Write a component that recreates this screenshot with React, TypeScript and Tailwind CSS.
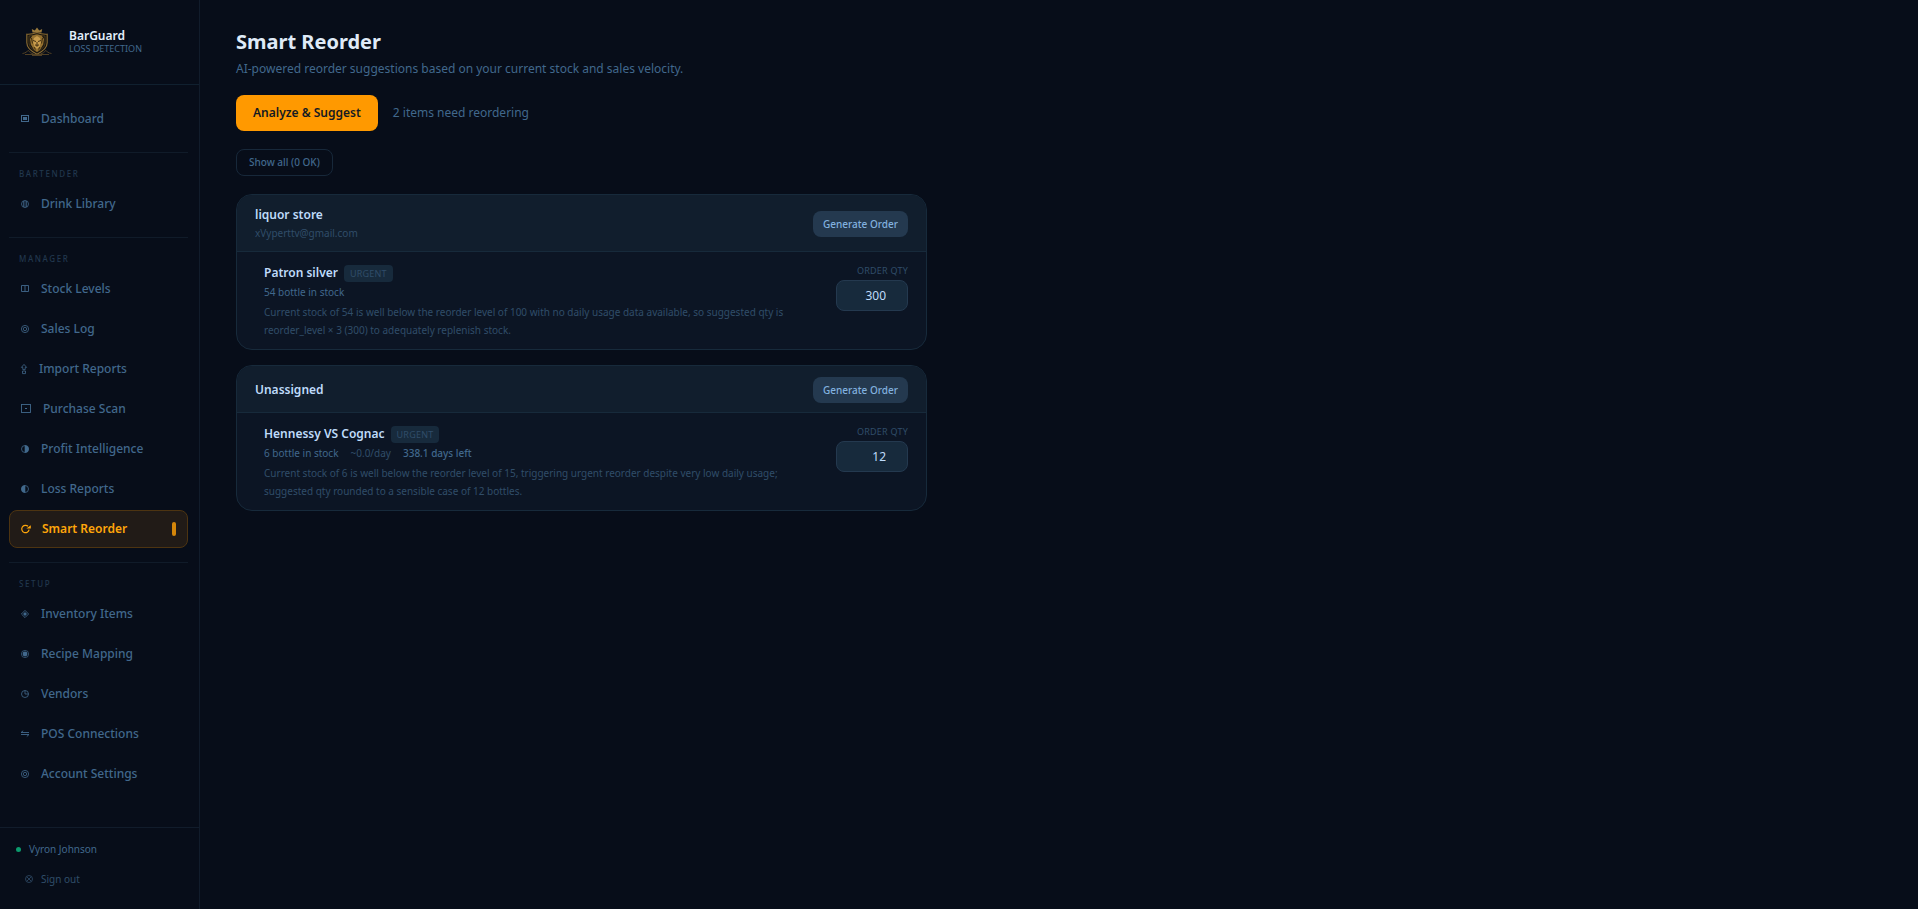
import { useState } from "react";
import type { ReactNode } from "react";

type IconName =
  | "dashboard"
  | "drink"
  | "stock"
  | "target"
  | "upload"
  | "scan"
  | "halfRight"
  | "halfLeft"
  | "reorder"
  | "diamond"
  | "fisheye"
  | "clock"
  | "swap"
  | "signout";

const ICONS: Record<IconName, { width: number; body: ReactNode }> = {
  dashboard: {
    width: 8,
    body: (
      <>
        <rect x="0.5" y="0.5" width="7" height="6" />
        <rect x="2.5" y="2.5" width="3" height="2" fill="currentColor" />
      </>
    ),
  },
  drink: {
    width: 8,
    body: (
      <>
        <circle cx="4" cy="4" r="3.5" strokeWidth="0.8" />
        <path d="M2.5 1v6M4 .5v7M5.5 1v6" strokeWidth="0.7" />
      </>
    ),
  },
  stock: {
    width: 8,
    body: <path d="M.5 .5h7v6h-7zM4 .5v6" strokeWidth="0.9" />,
  },
  target: {
    width: 8,
    body: (
      <>
        <circle cx="4" cy="4" r="3.6" strokeWidth="0.8" />
        <circle cx="4" cy="4" r="1.7" strokeWidth="0.8" />
      </>
    ),
  },
  upload: {
    width: 6,
    body: <path d="M3 -.6L5.6 2.4H4.2v2.2H1.8V2.4H.4zM1.5 6h3v2.6h-3z" strokeWidth="0.8" />,
  },
  scan: {
    width: 10,
    body: (
      <>
        <rect x="0.5" y="-0.5" width="9" height="8" strokeWidth="0.9" />
        <path d="M4 3.5h2" />
      </>
    ),
  },
  halfRight: {
    width: 8,
    body: (
      <>
        <circle cx="4" cy="4" r="3.5" strokeWidth="0.8" />
        <path d="M4 .5a3.5 3.5 0 0 1 0 7z" fill="currentColor" strokeWidth="0.6" />
      </>
    ),
  },
  halfLeft: {
    width: 8,
    body: (
      <>
        <circle cx="4" cy="4" r="3.5" strokeWidth="0.8" />
        <path d="M4 .5a3.5 3.5 0 0 0 0 7z" fill="currentColor" strokeWidth="0.6" />
      </>
    ),
  },
  reorder: {
    width: 9,
    body: (
      <>
        <path d="M7 1.3A3.7 3.7 0 1 0 8.1 4.6" strokeWidth="1.2" />
        <path d="M5.4 3.4h4.4V.3z" fill="currentColor" stroke="none" />
      </>
    ),
  },
  diamond: {
    width: 8,
    body: (
      <>
        <path d="M4 .4L7.6 4 4 7.6.4 4z" strokeWidth="0.8" />
        <path d="M4 2L6 4 4 6 2 4z" fill="currentColor" stroke="none" />
      </>
    ),
  },
  fisheye: {
    width: 8,
    body: (
      <>
        <circle cx="4" cy="4" r="3.6" strokeWidth="0.7" />
        <circle cx="4" cy="4" r="2.4" fill="currentColor" stroke="none" />
      </>
    ),
  },
  clock: {
    width: 8,
    body: (
      <>
        <circle cx="4" cy="4" r="3.5" strokeWidth="0.8" />
        <path d="M4 .5V4h3.5" strokeWidth="0.8" />
      </>
    ),
  },
  swap: {
    width: 8,
    body: <path d="M0 2.5h8M0 2.5L2.2.8M0 4.5h8M8 4.5L5.8 6.5" strokeWidth="0.9" />,
  },
  signout: {
    width: 8,
    body: (
      <>
        <circle cx="4" cy="4" r="3.5" strokeWidth="0.8" />
        <path d="M2 2l4 4M6 2L2 6" strokeWidth="0.8" />
      </>
    ),
  },
};

function Icon({ name }: { name: IconName }) {
  const { width, body } = ICONS[name];
  return (
    <svg
      width={width}
      height="8"
      viewBox={`0 0 ${width} 8`}
      fill="none"
      stroke="currentColor"
      className="shrink-0 overflow-visible"
      aria-hidden="true"
    >
      {body}
    </svg>
  );
}

const NAV: { title: string | null; items: { label: string; icon: IconName }[] }[] = [
  { title: null, items: [{ label: "Dashboard", icon: "dashboard" }] },
  { title: "Bartender", items: [{ label: "Drink Library", icon: "drink" }] },
  {
    title: "Manager",
    items: [
      { label: "Stock Levels", icon: "stock" },
      { label: "Sales Log", icon: "target" },
      { label: "Import Reports", icon: "upload" },
      { label: "Purchase Scan", icon: "scan" },
      { label: "Profit Intelligence", icon: "halfRight" },
      { label: "Loss Reports", icon: "halfLeft" },
      { label: "Smart Reorder", icon: "reorder" },
    ],
  },
  {
    title: "Setup",
    items: [
      { label: "Inventory Items", icon: "diamond" },
      { label: "Recipe Mapping", icon: "fisheye" },
      { label: "Vendors", icon: "clock" },
      { label: "POS Connections", icon: "swap" },
      { label: "Account Settings", icon: "target" },
    ],
  },
];

const VENDORS = [
  {
    id: "liquor-store",
    name: "liquor store",
    email: "xVyperttv@gmail.com",
    item: "Patron silver",
    stock: "54 bottle in stock",
    usage: null,
    daysLeft: null,
    reason:
      "Current stock of 54 is well below the reorder level of 100 with no daily usage data available, so suggested qty is reorder_level × 3 (300) to adequately replenish stock.",
    qty: 300,
  },
  {
    id: "unassigned",
    name: "Unassigned",
    email: null,
    item: "Hennessy VS Cognac",
    stock: "6 bottle in stock",
    usage: "~0.0/day",
    daysLeft: "338.1 days left",
    reason:
      "Current stock of 6 is well below the reorder level of 15, triggering urgent reorder despite very low daily usage; suggested qty rounded to a sensible case of 12 bottles.",
    qty: 12,
  },
];

function Logo() {
  return (
    <svg width="30" height="30" viewBox="0 0 30 30" fill="none" className="shrink-0" aria-hidden="true">
      <path d="M10.5 5.5L9.8 2l3 1.6L15 .5l2.2 3.1 3-1.6-.7 3.5z" fill="#9a7a3c" />
      <path
        d="M4.8 7.2Q10 7.5 15 5.6q5 1.9 10.2 1.6v8.6c0 5.4-4.4 8.6-10.2 11.4C9.2 24.4 4.8 21.2 4.8 15.8z"
        fill="#17140f"
        stroke="#8b6c33"
        strokeWidth="1.1"
      />
      <path d="M7 9q4.500 0 8-1.800Q18.500 9 23 9v6.500c0 4-3 6.800-8 9.300-5-2.500-8-5.300-8-9.300z" stroke="#5d4822" strokeWidth="0.7" />
      <path d="M15 7.500l4.500 1 2.500 3.500-.8 5.500-2.700 4.500L15 25l-3.500-3-2.700-4.500L8 12l2.500-3.500z" fill="#94702f" />
      <path d="M15 9l3 2 1 4-1.500 4.500L15 22l-2.500-2.500L11 15l1-4z" fill="#c89c4d" />
      <path
        d="M11 13.500l3 1M19 13.500l-3 1M15 15v2.500M13.400 18h3.200L15 19.300zM12 20l1.500 2.500M18 20l-1.500 2.500M9.500 11l1 5.500M20.500 11l-1 5.500"
        stroke="#33240d"
        strokeWidth="0.9"
      />
      <path
        d="M.5 26.500c3-.2 4.500-2.300 6-3 1 2 3 3 5 3.200M29.500 26.500c-3-.2-4.500-2.300-6-3-1 2-3 3-5 3.200M3 27.500h24M10 28.500h10"
        stroke="#634c27"
        strokeWidth="0.8"
      />
    </svg>
  );
}

function Sidebar() {
  return (
    <aside className="w-[200px] shrink-0 flex flex-col border-r border-[#111c2b]">
      <div className="h-[85px] shrink-0 flex items-center gap-4 pl-[22px] border-b border-[#10202f]">
        <Logo />
        <div className="pl-px">
          <p className="text-[12px] leading-[14px] font-semibold text-[#e2effc]">BarGuard</p>
          <p className="text-[9px] leading-3 text-[#41688c]">LOSS DETECTION</p>
        </div>
      </div>

      <nav className="flex-1 pt-[15px] pl-[9px] pr-[11px]">
        {NAV.map((section) => (
          <div key={section.title ?? "main"}>
            {section.title && (
              <>
                <div className="h-px mt-[14px] bg-[#101b29]" />
                <h2 className="pt-[15px] pb-[6px] pl-[10px] text-[8px] leading-[11px] font-medium tracking-[0.2em] uppercase text-[#21374d]">
                  {section.title}
                </h2>
              </>
            )}
            <ul className="flex flex-col gap-[2px]">
              {section.items.map((item) => {
                const active = item.label === "Smart Reorder";
                return (
                  <li key={item.label}>
                    <a
                      href="#"
                      aria-current={active ? "page" : undefined}
                      className={`h-[38px] px-[11px] flex items-center gap-3 rounded-lg border text-[12px] leading-4 ${
                        active
                          ? "border-[#4d3411] bg-[#211b17] font-semibold text-[#ffa60a]"
                          : "border-transparent font-medium text-[#41688c]"
                      }`}
                    >
                      <Icon name={item.icon} />
                      <span className="flex-1">{item.label}</span>
                      {active && <span className="w-1 h-[14px] rounded-xs bg-[#d4860a]" />}
                    </a>
                  </li>
                );
              })}
            </ul>
          </div>
        ))}
      </nav>

      <div className="h-[82px] shrink-0 pt-[11px] pl-4 border-t border-[#111c2b]">
        <div className="flex items-center gap-2 text-[10px] leading-5 text-[#41688c]">
          <span className="w-[5px] h-[5px] rounded-full bg-[#0b9b6d]" />
          Vyron Johnson
        </div>
        <button type="button" className="mt-[10px] ml-[9px] flex items-center gap-2 text-[10px] leading-5 text-[#304d69]">
          <Icon name="signout" />
          Sign out
        </button>
      </div>
    </aside>
  );
}

function VendorCard({ vendor }: { vendor: (typeof VENDORS)[number] }) {
  const [qty, setQty] = useState(vendor.qty);
  const inputId = `qty-${vendor.id}`;

  return (
    <section className="rounded-2xl border border-[#172a3b] bg-[#0c1524] overflow-hidden">
      <header className="px-[18px] pt-[11px] pb-[9px] flex items-center justify-between border-b border-[#172a3b] bg-[#111e2d]">
        <div>
          <h2 className="text-[12px] leading-[18px] font-semibold text-[#bfdbfa]">{vendor.name}</h2>
          {vendor.email && <p className="text-[10px] leading-[18px] text-[#304d69]">{vendor.email}</p>}
        </div>
        <button type="button" className="h-[26px] px-[10px] rounded-lg bg-[#24394f] text-[10px] font-medium text-[#82b1df]">
          Generate Order
        </button>
      </header>

      <div className="flex items-start justify-between gap-4 pt-3 pb-[10px] pl-[27px] pr-[18px]">
        <div className="max-w-[545px]">
          <div className="flex items-center gap-[6px]">
            <h3 className="text-[12px] leading-[18px] font-semibold text-[#bfdbfa]">{vendor.item}</h3>
            <span className="h-[17px] px-[6px] rounded-sm bg-[#172a3c] text-[9px] leading-[17px] tracking-wide text-[#304d69]">
              URGENT
            </span>
          </div>
          <div className="mt-px flex gap-3 text-[10px] leading-[18px] text-[#41688c]">
            <span>{vendor.stock}</span>
            {vendor.usage && <span className="text-[#304d69]">{vendor.usage}</span>}
            {vendor.daysLeft && <span className="font-medium">{vendor.daysLeft}</span>}
          </div>
          <p className="mt-[2px] text-[10px] leading-[18px] text-[#304d69]">{vendor.reason}</p>
        </div>
        <div className="flex flex-col items-end gap-[3px]">
          <label htmlFor={inputId} className="text-[9px] leading-[13px] tracking-wide text-[#304d69]">
            ORDER QTY
          </label>
          <input
            id={inputId}
            type="number"
            value={qty}
            onChange={(e) => setQty(Number(e.target.value))}
            className="w-[72px] h-[31px] pr-[21px] rounded-lg border border-[#24394f] bg-[#172a3c] text-right text-[12px] text-[#bfdbfa] [appearance:textfield] [&::-webkit-inner-spin-button]:appearance-none"
          />
        </div>
      </div>
    </section>
  );
}

export default function App() {
  return (
    <div className="min-h-screen flex bg-[#070d19] font-['Noto_Sans','Open_Sans',sans-serif]">
      <Sidebar />
      <main className="flex-1 px-9 pt-7">
        <h1 className="text-[20px] leading-7 font-bold text-[#dfeaf7]">Smart Reorder</h1>
        <p className="mt-1 text-[12px] leading-[18px] text-[#41688c]">
          AI-powered reorder suggestions based on your current stock and sales velocity.
        </p>

        <div className="mt-[17px] flex items-center gap-[15px]">
          <button type="button" className="h-9 px-[17px] rounded-lg bg-[#ff9900] text-[12px] font-semibold text-[#141a22]">
            Analyze &amp; Suggest
          </button>
          <span className="text-[12px] leading-[18px] text-[#41688c]">2 items need reordering</span>
        </div>

        <button
          type="button"
          className="mt-[18px] h-[27px] px-3 block rounded-lg border border-[#17283a] text-[10px] font-medium text-[#41688c]"
        >
          Show all (0 OK)
        </button>

        <div className="mt-[18px] max-w-[691px] flex flex-col gap-[15px]">
          {VENDORS.map((vendor) => (
            <VendorCard key={vendor.id} vendor={vendor} />
          ))}
        </div>
      </main>
    </div>
  );
}
